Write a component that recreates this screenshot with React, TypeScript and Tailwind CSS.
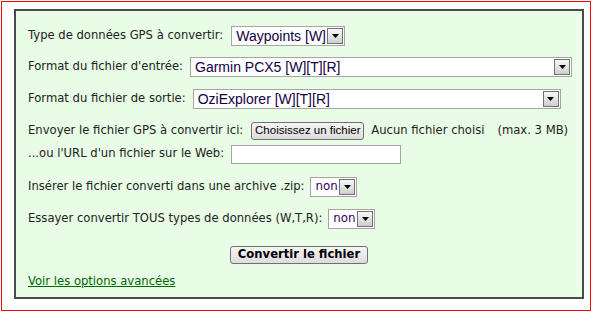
import React from "react";

const label = "text-[11.6px] text-[#222222] whitespace-nowrap";
const verdana = { fontFamily: '"DejaVu Sans", Verdana, sans-serif' };
const arial = { fontFamily: '"Liberation Sans", Arial, sans-serif' };

function Arrow() {
  return (
    <div className="w-[16px] h-[16px] border border-[#707070] bg-gradient-to-b from-[#f8f8f8] to-[#cfcfcf] flex items-center justify-center shrink-0">
      <svg width="7" height="4" viewBox="0 0 7 4">
        <path d="M0 0 L7 0 L3.5 4 Z" fill="#000" />
      </svg>
    </div>
  );
}

function Select({ text, width, small }: { text: string; width: number; small?: boolean }) {
  return (
    <div
      className="h-[20px] border border-[#a5a5a5] bg-white flex items-center justify-between pl-[4px] pr-[1px] shrink-0"
      style={{ width }}
    >
      <span
        className={
          small
            ? "text-[11.8px] text-[#330066] leading-none whitespace-nowrap"
            : "text-[14px] text-[#110044] leading-none whitespace-nowrap"
        }
        style={small ? verdana : arial}
      >
        {text}
      </span>
      <Arrow />
    </div>
  );
}

export default function App() {
  return (
    <div className="w-[592px] h-[312px] p-[1px] bg-white" style={verdana}>
      <div className="h-full border border-[#ff0000] pl-[12px] pt-[7px]">
        <div className="w-[570px] h-[290px] border-2 border-[#4a4a4a] bg-[#e8fce6] pl-[12px] pt-[15px]">
          <div className="flex items-center h-[20px]">
            <span className={label}>Type de données GPS à convertir:</span>
            <div className="ml-[8px]">
              <Select text="Waypoints [W]" width={114} />
            </div>
          </div>
          <div className="flex items-center h-[20px] mt-[11px]">
            <span className={label}>Format du fichier d'entrée:</span>
            <div className="ml-[7px]">
              <Select text="Garmin PCX5 [W][T][R]" width={382} />
            </div>
          </div>
          <div className="flex items-center h-[20px] mt-[12px]">
            <span className={label}>Format du fichier de sortie:</span>
            <div className="ml-[7px]">
              <Select text="OziExplorer [W][T][R]" width={368} />
            </div>
          </div>
          <div className="flex items-center h-[20px] mt-[12px]">
            <span className={label}>Envoyer le fichier GPS à convertir ici:</span>
            <button
              className="ml-[8px] h-[18px] w-[113px] border border-[#707070] rounded-[3px] bg-gradient-to-b from-[#f6f6f6] to-[#dcdcdc] text-[11.5px] text-black leading-none whitespace-nowrap"
              style={arial}
            >
              Choisissez un fichier
            </button>
            <span className={label + " ml-[7px]"}>Aucun fichier choisi</span>
            <span className={label + " ml-[13px]"}>(max. 3 MB)</span>
          </div>
          <div className="flex items-center h-[20px] mt-[3px]">
            <span className={label}>...ou l'URL d'un fichier sur le Web:</span>
            <div className="ml-[7px] w-[170px] h-[19px] border border-[#a5a5a5] bg-white" />
          </div>
          <div className="flex items-center h-[20px] mt-[13px]">
            <span className={label}>Insérer le fichier converti dans une archive .zip:</span>
            <div className="ml-[6px]">
              <Select text="non" width={47} small />
            </div>
          </div>
          <div className="flex items-center h-[20px] mt-[12px]">
            <span className={label}>Essayer convertir TOUS types de données (W,T,R):</span>
            <div className="ml-[6px]">
              <Select text="non" width={47} small />
            </div>
          </div>
          <div className="flex justify-center h-[20px] mt-[17px] pr-[12px]">
            <button className="h-[18px] w-[138px] border border-[#707070] rounded-[3px] bg-gradient-to-b from-[#f6f6f6] to-[#dcdcdc] text-[11.6px] font-bold text-black leading-none whitespace-nowrap">
              Convertir le fichier
            </button>
          </div>
          <div className="flex items-center h-[20px] mt-[6px]">
            <a href="#" className="text-[11.6px] text-[#006600] underline whitespace-nowrap">
              Voir les options avancées
            </a>
          </div>
        </div>
      </div>
    </div>
  );
}
